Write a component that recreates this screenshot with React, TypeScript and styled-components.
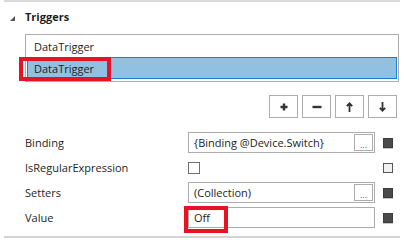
import styled, { createGlobalStyle } from 'styled-components';

const Global = createGlobalStyle`
  html, body { margin: 0; padding: 0; background: #fff; }
  body { font-family: 'Open Sans', 'Noto Sans', sans-serif; color: #1e1e1e; }
`;

interface Prop {
  label: string;
  kind: 'text' | 'check';
  value?: string;
  browse?: boolean;
  filled: boolean;
  marked?: boolean;
}

const props: Prop[] = [
  { label: 'Binding', kind: 'text', value: '{Binding @Device.Switch}', browse: true, filled: true },
  { label: 'IsRegularExpression', kind: 'check', filled: false },
  { label: 'Setters', kind: 'text', value: '(Collection)', browse: true, filled: true },
  { label: 'Value', kind: 'text', value: 'Off', filled: true, marked: true },
];

const App = () => {
  return (
    <Panel>
      <Global />
      <Header>
        <Caret />
        <Title>Triggers</Title>
      </Header>
      <ListBox>
        <Item>DataTrigger</Item>
        <Item selected>DataTrigger</Item>
        <Mark style={{ left: -7, top: 22, width: 84, height: 16 }} />
      </ListBox>
      <Toolbar>
        <ToolButton>
          <svg width="8" height="8" viewBox="0 0 8 8">
            <path d="M4 0.5V7.5M0.5 4H7.5" stroke="#333" strokeWidth="2.4" />
          </svg>
        </ToolButton>
        <ToolButton>
          <svg width="10" height="8" viewBox="0 0 10 8">
            <path d="M0.5 4H9.5" stroke="#333" strokeWidth="2.4" />
          </svg>
        </ToolButton>
        <ToolButton>
          <svg width="7" height="10" viewBox="0 0 7 10">
            <path d="M3.5 1.5V10M0.8 4.2L3.5 1.3L6.2 4.2" stroke="#333" strokeWidth="1.8" fill="none" />
          </svg>
        </ToolButton>
        <ToolButton>
          <svg width="7" height="10" viewBox="0 0 7 10">
            <path d="M3.5 0V8.5M0.8 5.8L3.5 8.7L6.2 5.8" stroke="#333" strokeWidth="1.8" fill="none" />
          </svg>
        </ToolButton>
      </Toolbar>
      <Grid>
        {props.map((p) => (
          <Row key={p.label}>
            <Label>{p.label}</Label>
            {p.kind === 'check' ? (
              <CheckCell>
                <Check />
              </CheckCell>
            ) : (
              <Field>
                <FieldText>{p.value}</FieldText>
                {p.browse && <Browse>...</Browse>}
                {p.marked && <Mark style={{ left: -5, top: -2, width: 36, height: 19 }} />}
              </Field>
            )}
            <Indicator filled={p.filled} />
          </Row>
        ))}
      </Grid>
    </Panel>
  );
};
export default App;

const Panel = styled.div`
  margin-left: 4px;
  width: 396px;
  height: 238px;
  border-top: 2px solid #dadada;
  border-bottom: 2px solid #d4d4d4;
  box-sizing: border-box;
  display: flex;
  flex-direction: column;
`;
const Header = styled.div`
  height: 30px;
  display: flex;
  align-items: center;
  padding-left: 6px;
  box-sizing: border-box;
`;
const Caret = styled.div`
  width: 0;
  height: 0;
  border-left: 5px solid transparent;
  border-bottom: 5px solid #555;
  margin-top: 2px;
  margin-right: 10px;
`;
const Title = styled.span`
  font-size: 11px;
  font-weight: 700;
  color: #1e1e1e;
  margin-top: -2px;
`;
const ListBox = styled.div`
  position: relative;
  margin: 2px 0 0 21px;
  width: 374px;
  height: 48px;
  border: 1px solid #acacac;
  box-sizing: border-box;
  padding: 0 1px;
  display: flex;
  flex-direction: column;
`;
const Item = styled.div<{ selected?: boolean }>`
  height: 22px;
  display: flex;
  align-items: center;
  padding-left: 6px;
  font-size: 11px;
  box-sizing: border-box;
  background: ${(p) => (p.selected ? '#92c0e1' : 'transparent')};
  border: 1px solid ${(p) => (p.selected ? '#1a7ed3' : 'transparent')};
  color: #1e1e1e;
`;
const Mark = styled.div`
  position: absolute;
  border: 4px solid #e81224;
  pointer-events: none;
`;
const Toolbar = styled.div`
  display: flex;
  justify-content: flex-end;
  gap: 4px;
  margin-top: 13px;
  padding-right: 3px;
`;
const ToolButton = styled.div`
  width: 29px;
  height: 23px;
  border: 1px solid #adadad;
  box-sizing: border-box;
  background: #fff;
  display: flex;
  align-items: center;
  justify-content: center;
`;
const Grid = styled.div`
  display: flex;
  flex-direction: column;
  margin-top: 12px;
`;
const Row = styled.div`
  height: 25px;
  display: flex;
  align-items: center;
  padding-left: 21px;
`;
const Label = styled.div`
  width: 163px;
  font-size: 11px;
  color: #1e1e1e;
`;
const Field = styled.div`
  position: relative;
  width: 187px;
  height: 21px;
  border: 1px solid #acacac;
  box-sizing: border-box;
  display: flex;
  align-items: center;
  padding: 0 1px 0 5px;
`;
const FieldText = styled.span`
  flex: 1;
  font-size: 11px;
  color: #1e1e1e;
  white-space: nowrap;
`;
const Browse = styled.div`
  width: 19px;
  height: 17px;
  border: 1px solid #acacac;
  box-sizing: border-box;
  font-size: 9px;
  line-height: 19px;
  text-align: center;
  color: #555;
  overflow: hidden;
`;
const CheckCell = styled.div`
  width: 187px;
  display: flex;
`;
const Check = styled.div`
  width: 12px;
  height: 12px;
  border: 1px solid #707070;
  box-sizing: border-box;
  background: #fff;
`;
const Indicator = styled.div<{ filled: boolean }>`
  width: 10px;
  height: 10px;
  margin-left: 8px;
  box-sizing: border-box;
  border: 1px solid ${(p) => (p.filled ? '#3c3c3c' : '#555')};
  background: ${(p) => (p.filled ? '#4a4a4a' : '#efefef')};
  box-shadow: ${(p) => (p.filled ? '0 1px 0 #c8c8c8' : 'none')};
`;
